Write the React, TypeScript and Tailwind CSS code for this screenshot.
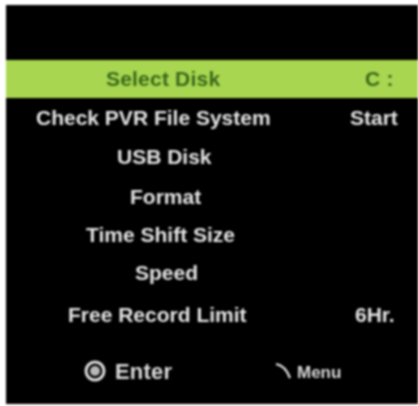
const rows = [
  { label: "Check PVR File System", value: "Start", height: "h-[39px]", labelPad: "pl-[30px]", valuePad: "pl-[30px]" },
  { label: "USB Disk", value: "", height: "h-[40px]", labelPad: "pl-[111px]", valuePad: "" },
  { label: "Format", value: "", height: "h-[39px]", labelPad: "pl-[124px]", valuePad: "" },
  { label: "Time Shift Size", value: "", height: "h-[38px]", labelPad: "pl-[80px]", valuePad: "" },
  { label: "Speed", value: "", height: "h-[38px]", labelPad: "pl-[129px]", valuePad: "" },
  { label: "Free Record Limit", value: "6Hr.", height: "h-[46px]", labelPad: "pl-[62px]", valuePad: "pl-[35px]" },
];

export default function App() {
  return (
    <div className="w-[418px] h-[406px] bg-white pl-[6px] pt-[5px] pb-[2px] overflow-hidden font-['Liberation_Sans',sans-serif]">
      <div className="h-full bg-black flex flex-col blur-[0.8px]">
        <div className="h-[55px] shrink-0" />

        {/* Selected row */}
        <div className="h-[38px] shrink-0 bg-[#a9d650] grid grid-cols-[314px_1fr] items-center text-[#38681a] text-[21px] font-bold tracking-[0.2px]">
          <div className="pl-[100px]">Select Disk</div>
          <div className="pl-[45px] whitespace-pre">C :</div>
        </div>

        {rows.map((row) => (
          <div
            key={row.label}
            className={`${row.height} shrink-0 grid grid-cols-[314px_1fr] items-center text-[#e4e4e4] text-[21px] font-bold`}
          >
            <div className={row.labelPad}>{row.label}</div>
            <div className={row.valuePad}>{row.value}</div>
          </div>
        ))}

        {/* Footer */}
        <div className="flex-1 flex items-center pl-[78px] text-[#dcdcdc]">
          <div className="w-[191px] flex items-center gap-[9px] text-[22px] font-bold tracking-[0.2px]">
            <svg width="22" height="22" viewBox="0 0 22 22">
              <circle cx="11" cy="11" r="9" fill="none" stroke="#e0e0e0" strokeWidth="3" />
              <circle cx="11" cy="11" r="5" fill="#b8b8b8" />
            </svg>
            Enter
          </div>
          <div className="flex items-start gap-[5px] text-[17px] font-bold">
            <svg className="mt-[5px]" width="17" height="17" viewBox="0 0 17 17">
              <path d="M1 2 C7 3 12 8 15 16" fill="none" stroke="#e8e8e8" strokeWidth="2.2" />
            </svg>
            <span className="pt-[3px]">Menu</span>
          </div>
        </div>
      </div>
    </div>
  );
}
